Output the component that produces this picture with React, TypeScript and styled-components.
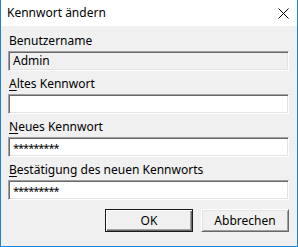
import styled, { createGlobalStyle } from 'styled-components';

const GlobalStyle = createGlobalStyle`
  html, body {
    margin: 0;
    padding: 0;
    background: #ffffff;
  }
  body {
    font-family: "Segoe UI", "Noto Sans", sans-serif;
    font-size: 12px;
    color: #000;
  }
`;

const Window = styled.div`
  width: 298px;
  height: 247px;
  box-sizing: border-box;
  border: 1px solid #1883d7;
  border-top: none;
  display: flex;
  flex-direction: column;
  background: #f0f0f0;
`;

const TitleBar = styled.div`
  height: 26px;
  flex: 0 0 26px;
  background: #ffffff;
  display: flex;
  align-items: center;
  justify-content: space-between;
  padding: 0 8px 0 6px;
`;

const Title = styled.span`
  font-size: 12px;
  line-height: 16px;
  margin-top: -1px;
`;

const CloseButton = styled.span`
  display: flex;
  width: 11px;
  height: 11px;
`;

const Body = styled.div`
  flex: 1;
  display: flex;
  flex-direction: column;
  padding: 7px 8px 0 7px;
`;

const Group = styled.div`
  display: flex;
  flex-direction: column;
  margin-bottom: 5px;
`;

const Label = styled.label`
  height: 16px;
  line-height: 16px;
  margin: 0 0 2px 1px;
  white-space: nowrap;
`;

const Key = styled.span`
  text-decoration: underline;
  text-underline-offset: 2px;
`;

const Field = styled.div<{ $readOnly?: boolean }>`
  height: 20px;
  box-sizing: border-box;
  border-top: 1px solid #a0a0a0;
  border-left: 1px solid #a0a0a0;
  border-right: 1px solid #ffffff;
  border-bottom: 1px solid #ffffff;
  box-shadow: inset 1px 1px 0 #696969, inset -1px -1px 0 #e3e3e3;
  background: ${(p) => (p.$readOnly ? '#f0f0f0' : '#ffffff')};
  padding: 0 4px;
  display: flex;
  align-items: center;
  line-height: 16px;
`;

const Stars = styled.span`
  letter-spacing: -1px;
  font-size: 11px;
  margin-top: 1px;
`;

const Buttons = styled.div`
  display: flex;
  justify-content: flex-end;
  gap: 8px;
  margin-top: 4px;
`;

const Button = styled.div<{ $default?: boolean }>`
  width: 88px;
  height: 23px;
  box-sizing: border-box;
  display: flex;
  align-items: center;
  justify-content: center;
  background: #f0f0f0;
  border-top: 1px solid ${(p) => (p.$default ? '#1a1a1a' : '#ffffff')};
  border-left: 1px solid ${(p) => (p.$default ? '#1a1a1a' : '#ffffff')};
  border-right: 1px solid ${(p) => (p.$default ? '#1a1a1a' : '#696969')};
  border-bottom: 1px solid ${(p) => (p.$default ? '#1a1a1a' : '#696969')};
  box-shadow: ${(p) =>
    p.$default
      ? 'inset 1px 1px 0 #ffffff, inset -1px -1px 0 #696969, inset -2px -2px 0 #a0a0a0'
      : 'inset 1px 1px 0 #e3e3e3, inset -1px -1px 0 #a0a0a0'};
`;

const fields = [
  { label: 'Benutzername', key: '', rest: 'Benutzername', value: 'Admin', readOnly: true },
  { label: 'Altes Kennwort', key: 'A', rest: 'ltes Kennwort', value: '', readOnly: false },
  { label: 'Neues Kennwort', key: 'N', rest: 'eues Kennwort', value: '*********', readOnly: false },
  { label: 'Bestätigung des neuen Kennworts', key: 'B', rest: 'estätigung des neuen Kennworts', value: '*********', readOnly: false },
];

const App = () => {
  return (
    <>
      <GlobalStyle />
      <Window>
        <TitleBar>
          <Title>Kennwort ändern</Title>
          <CloseButton>
            <svg width="11" height="11" viewBox="0 0 11 11">
              <path d="M0.5 0.5 L10.5 10.5 M10.5 0.5 L0.5 10.5" stroke="#000" strokeWidth="1" />
            </svg>
          </CloseButton>
        </TitleBar>
        <Body>
          {fields.map((f) => (
            <Group key={f.label}>
              <Label>
                {f.key && <Key>{f.key}</Key>}
                {f.rest}
              </Label>
              <Field $readOnly={f.readOnly}>
                {f.value.startsWith('*') ? <Stars>{f.value}</Stars> : f.value}
              </Field>
            </Group>
          ))}
          <Buttons>
            <Button $default>OK</Button>
            <Button>Abbrechen</Button>
          </Buttons>
        </Body>
      </Window>
    </>
  );
};

export default App;
